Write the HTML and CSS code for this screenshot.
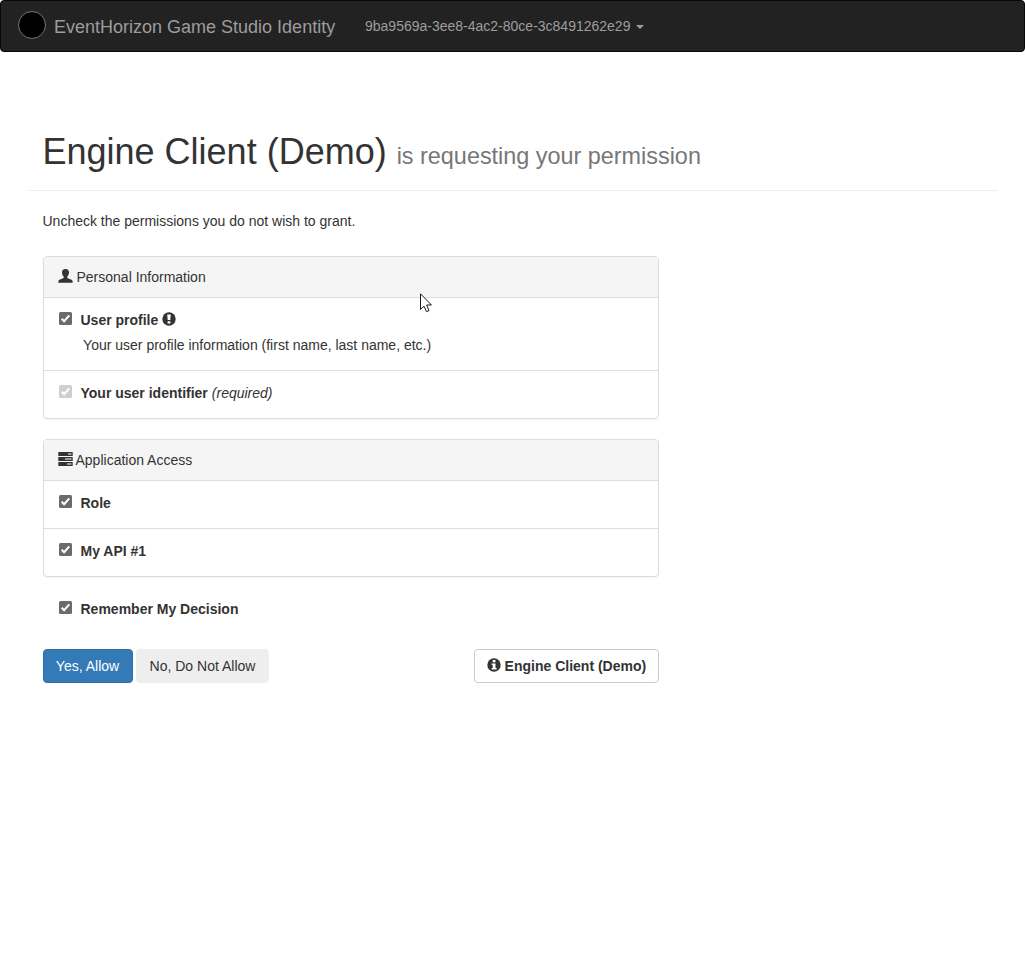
FILE: index.html
```
<!DOCTYPE html>
<html lang="en">
<head>
<meta charset="utf-8">
<title>EventHorizon Game Studio Identity</title>
<link rel="stylesheet" href="styles.css">
</head>
<body>
<svg class="defs" width="0" height="0">
  <symbol id="check" viewBox="0 0 13 13"><rect width="13" height="13" rx="1.5" fill="currentColor"/><path d="M2.7 6.7 5.1 9.2 10.3 3.3" fill="none" stroke="#fff" stroke-width="2"/></symbol>
</svg>
<nav class="navbar">
  <a class="brand"><span class="logo"></span><span class="brand-name">EventHorizon Game Studio Identity</span></a>
  <a class="account"><span class="account-id">9ba9569a-3ee8-4ac2-80ce-3c8491262e29</span><span class="caret"></span></a>
</nav>
<main class="container">
  <header class="page-header">
    <h1><span class="client">Engine Client (Demo)</span> <small class="request">is requesting your permission</small></h1>
  </header>
  <form class="consent">
    <p class="intro">Uncheck the permissions you do not wish to grant.</p>
    <section class="panel">
      <div class="panel-heading">
        <svg class="icon user" viewBox="0 0 15 14"><path d="M7.5 0C9.9 0 11.1 1.5 11 3.7 10.9 5.6 10.1 6.8 9.3 7.6V9C10.6 9.9 14.3 10.4 14.6 12V13.7H.4V12C.7 10.4 4.4 9.9 5.7 9V7.6C4.9 6.8 4.1 5.6 4 3.7 3.9 1.5 5.1 0 7.5 0Z"/></svg>
        <span>Personal Information</span>
      </div>
      <ul class="list">
        <li class="item">
          <div class="scope"><svg class="check"><use href="#check"/></svg><strong class="profile">User profile</strong>
            <svg class="icon mark" viewBox="0 0 14 14"><circle cx="7" cy="7" r="6.7"/><path class="cut" d="M5.2 2.4H8.8L8.3 8H5.7ZM5.6 9.2H8.4V11.5H5.6Z"/></svg></div>
          <p class="description">Your user profile information (first name, last name, etc.)</p>
        </li>
        <li class="item">
          <div class="scope"><svg class="check disabled"><use href="#check"/></svg><strong>Your user identifier</strong><em class="required">(required)</em></div>
        </li>
      </ul>
    </section>
    <section class="panel">
      <div class="panel-heading">
        <svg class="icon tasks" viewBox="0 0 15 14"><rect x=".3" y="0" width="14.4" height="4" rx=".6"/><rect x=".3" y="5" width="14.4" height="4" rx=".6"/><rect x=".3" y="10" width="14.4" height="4" rx=".6"/><path class="cut" d="M10 1.5H13.5V2.5H10ZM7 6.5H13.5V7.5H7ZM9 11.5H13.5V12.5H9Z"/></svg>
        <span>Application Access</span>
      </div>
      <ul class="list">
        <li class="item"><div class="scope"><svg class="check"><use href="#check"/></svg><strong>Role</strong></div></li>
        <li class="item"><div class="scope"><svg class="check"><use href="#check"/></svg><strong>My API #1</strong></div></li>
      </ul>
    </section>
    <div class="remember scope"><svg class="check"><use href="#check"/></svg><strong>Remember My Decision</strong></div>
    <div class="actions">
      <button type="button" class="btn primary">Yes, Allow</button>
      <button type="button" class="btn muted">No, Do Not Allow</button>
      <a class="btn outline"><svg class="icon info" viewBox="0 0 14 14"><circle cx="7" cy="7" r="6.7"/><path class="cut" d="M5.7 2H8.5V4.2H5.7ZM4.7 5.4H8.5V10H9.6V11.6H4.7V10H5.7V7H4.7Z"/></svg><strong>Engine Client (Demo)</strong></a>
    </div>
  </form>
</main>
<svg class="cursor" viewBox="0 0 12 20"><path d="M.5.8V16.5L4 13.2 6.5 18.7 9 17.6 6.6 12H11.4Z" fill="#fff" stroke="#1b1724" stroke-width="1"/></svg>
</body>
</html>
```
FILE: styles.css
```
* { box-sizing: border-box; }
body {
  margin: 0;
  font-family: "Liberation Sans", Arial, sans-serif;
  font-size: 14px;
  line-height: 20px;
  color: #333;
  background: #fff;
}
.defs { position: absolute; }
.navbar {
  display: flex;
  height: 52px;
  padding: 0 17px;
  color: #9d9d9d;
  background: #222;
  border: 1px solid #080808;
  border-radius: 4px;
}
.brand {
  display: flex;
  align-items: center;
  gap: 8px;
  width: 347px;
  font-size: 18px;
  white-space: nowrap;
}
.brand-name { padding-top: 2px; }
.logo {
  flex: none;
  width: 28px;
  height: 28px;
  margin-top: -2px;
  background: #000;
  border: 1px solid #777;
  border-radius: 50%;
}
.account { display: flex; align-items: center; gap: 6px; white-space: nowrap; }
.caret {
  border-top: 4px solid;
  border-left: 4px solid transparent;
  border-right: 4px solid transparent;
  margin-top: 2px;
}
.container { width: 970px; margin: 0 auto; }
.page-header {
  margin: 60px 0 20px;
  padding: 20px 15px 18px;
  border-bottom: 1px solid #eee;
}
h1 { margin: 0; font-size: 36px; font-weight: 500; line-height: 39.6px; white-space: nowrap; }
h1 small { font-size: 23.4px; font-weight: 400; line-height: 1; color: #777; }
.consent { width: 646.66px; padding: 0 15px; }
.intro { margin: 0 0 25px; }
.panel {
  margin-bottom: 20px;
  border: 1px solid #ddd;
  border-radius: 4px;
  box-shadow: 0 1px 1px rgba(0, 0, 0, .05);
}
.panel-heading {
  display: flex;
  align-items: center;
  gap: 4px;
  height: 40px;
  padding: 0 14.5px;
  background: #f5f5f5;
  border-radius: 3px 3px 0 0;
}
.icon { flex: none; width: 14px; height: 14px; fill: #333; }
.icon .cut { fill: #fff; }
.user, .tasks { width: 15px; margin-top: -2px; }
.tasks { margin-right: -1.5px; }
.user { margin-right: -.5px; }
.list { margin: 0; padding: 0; list-style: none; }
.item { min-height: 48px; padding: 12px 15px 0; border-top: 1px solid #ddd; }
.item:has(.description) { height: 73px; }
.scope { display: flex; align-items: center; height: 20px; }
.check { flex: none; width: 13px; height: 13px; margin: -3px 9px 0 0; color: #6b6b6b; }
.check.disabled { color: #cfcfcf; }
.mark { margin-left: 4px; margin-top: -1px; }
.required { margin-left: 4px; }
.description { margin: 5px 0 0 24.6px; }
.remember { margin: 22px 16px 30px; }
.actions { display: flex; gap: 3.5px; }
.btn {
  display: flex;
  align-items: center;
  justify-content: center;
  height: 34px;
  padding: 0 12px;
  font: inherit;
  color: #333;
  border: 1px solid;
  border-radius: 4px;
  white-space: nowrap;
}
.primary { width: 90px; color: #fff; background: #337ab7; border-color: #2e6da4; }
.muted { width: 133px; background: #eee; border-color: #eee; }
.outline { margin-left: auto; gap: 4px; background: #fff; border-color: #ccc; }
.info { margin-top: -2px; }
.cursor { position: absolute; left: 420px; top: 293px; width: 12px; height: 20px; }
```
